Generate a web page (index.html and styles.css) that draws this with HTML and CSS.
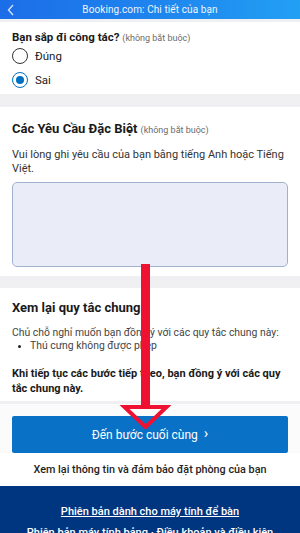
FILE: index.html
```html
<!DOCTYPE html>
<html lang="vi">
<head>
<meta charset="utf-8">
<link rel="stylesheet" href="styles.css">
</head>
<body>
<div class="page">
  <header class="topbar">
    <span class="back">
      <svg width="8" height="12" viewBox="0 0 8 12"><path d="M6 1 L1.5 6 L6 11" fill="none" stroke="#cfe3ff" stroke-width="1.4"/></svg>
    </span>
    <span class="top-title">Booking.com: Chi tiết của bạn</span>
  </header>

  <section class="card card-trip">
    <h2 class="q">Bạn sắp đi công tác? <span class="opt">(không bắt buộc)</span></h2>
    <label class="radio-row"><span class="radio"></span><span>Đúng</span></label>
    <label class="radio-row"><span class="radio on"></span><span>Sai</span></label>
  </section>

  <section class="card card-req">
    <h2 class="h">Các Yêu Cầu Đặc Biệt <span class="opt">(không bắt buộc)</span></h2>
    <p class="desc">Vui lòng ghi yêu cầu của bạn bằng tiếng Anh hoặc Tiếng Việt.</p>
    <div class="textarea"></div>
  </section>

  <section class="card card-rules">
    <h2 class="h">Xem lại quy tắc chung</h2>
    <p class="rules-intro">Chủ chỗ nghỉ muốn bạn đồng ý với các quy tắc chung này:</p>
    <ul class="rules-list"><li>Thú cưng không được phép</li></ul>
    <p class="agree">Khi tiếp tục các bước tiếp theo, bạn đồng ý với các quy tắc chung này.</p>
  </section>

  <div class="cta">
    <button class="btn">Đến bước cuối cùng <span class="chev">›</span></button>
  </div>
  <p class="review">Xem lại thông tin và đảm bảo đặt phòng của bạn</p>

  <footer class="footer">
    <a class="flink">Phiên bản dành cho máy tính để bàn</a>
    <p class="flinks"><a>Phiên bản máy tính bảng</a> · <a>Điều khoản và điều kiện</a></p>
  </footer>

  <svg class="arrow" width="300" height="533" viewBox="0 0 300 533">
    <rect x="141" y="264" width="9" height="143" fill="#ee1131"/>
    <path d="M124.5 407 L166.5 407 L145.5 427 Z" fill="none" stroke="#ee1131" stroke-width="4" stroke-linejoin="miter"/>
  </svg>
</div>
</body>
</html>
```

FILE: styles.css
```css
* { box-sizing: border-box; }
html, body { margin: 0; padding: 0; }
body {
  width: 300px;
  height: 533px;
  overflow: hidden;
  background: #f0f0f2;
  font-family: Roboto, "Liberation Sans", Arial, sans-serif;
  color: #262626;
}
.page { position: relative; width: 300px; height: 533px; overflow: hidden; }

.topbar {
  height: 19px;
  background: linear-gradient(90deg, #1c6de8 0%, #1f86ee 55%, #22a0f4 100%);
  display: flex;
  align-items: center;
  justify-content: center;
  position: relative;
  margin-bottom: 3px;
}
.back { position: absolute; left: 7px; top: 4px; display: flex; }
.top-title { color: #eef5ff; font-size: 10px; letter-spacing: 0.1px; }

.card { background: #fff; }
.card-trip { height: 72px; padding: 8px 12px 0; margin-bottom: 13px; }
.q { margin: 0 0 -1px; font-size: 11.5px; font-weight: 700; color: #1a1a1a; line-height: 14px; }
.opt { font-size: 9px; font-weight: 400; color: #6b6b6b; }
.radio-row { display: flex; align-items: center; gap: 7px; height: 24px; font-size: 11.5px; color: #222; }
.radio {
  width: 16px; height: 16px; border-radius: 50%;
  border: 1.3px solid #333; display: flex; align-items: center; justify-content: center;
  background: #fff;
}
.radio.on { border-color: #0071c2; }
.radio.on::after { content: ""; width: 8px; height: 8px; border-radius: 50%; background: #0071c2; }

.card-req { height: 169px; padding: 14px 12px 0; margin-bottom: 12px; }
.h { margin: 0; font-size: 13px; font-weight: 700; color: #1a1a1a; line-height: 16px; }
.desc { margin: 10px 0 0; font-size: 11px; line-height: 14px; color: #333; }
.textarea {
  margin-top: 6px;
  height: 85px;
  background: #eaedf8;
  border: 1px solid #9fb2cd;
  border-radius: 5px;
}

.card-rules { height: 113px; padding: 12px 12px 0; }
.rules-intro { margin: 10px 0 0; font-size: 10.4px; line-height: 13px; color: #444; white-space: nowrap; }
.rules-list { margin: 0; padding-left: 18px; font-size: 10.4px; line-height: 13px; color: #444; }
.rules-list li::marker { font-size: 9px; color: #222; }
.agree { margin: 14px 0 0; font-size: 11px; font-weight: 700; line-height: 15px; color: #1a1a1a; }

.cta {
  border-top: 3px solid #f0f0f2;
  padding: 12px 12px 0;
  background: #fbfbfb;
}
.btn {
  display: flex; align-items: center; justify-content: center; gap: 6px;
  width: 276px; height: 37px;
  background: #0a72c6;
  border: none; border-radius: 2px;
  color: #fff;
  font-family: inherit; font-size: 12px;
}
.chev { font-size: 15px; line-height: 1; margin-top: -2px; }
.review {
  margin: 0;
  background: #fff;
  height: 33px;
  display: flex; align-items: center; justify-content: center;
  font-size: 10.8px; font-weight: 500; color: #1e1e1e;
}

.footer {
  background: #003580;
  height: 60px;
  padding-top: 19px;
  text-align: center;
  color: #fff;
  font-size: 11px;
  font-weight: 500;
}
.flink { text-decoration: underline; display: block; line-height: 14px; }
.flinks { margin: 7px 0 0; line-height: 14px; white-space: nowrap; }
.flinks a { text-decoration: underline; }

.arrow { position: absolute; left: 0; top: 0; pointer-events: none; }
```
